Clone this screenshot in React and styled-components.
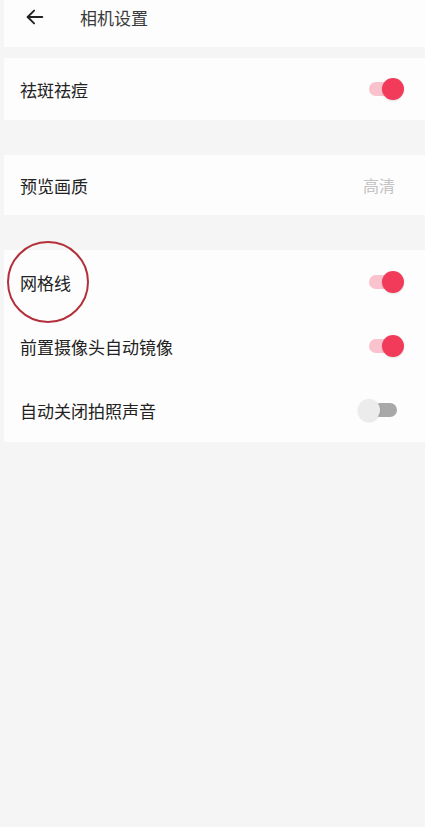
import styled, { createGlobalStyle } from 'styled-components'

const GlobalStyle = createGlobalStyle`
  html, body {
    margin: 0;
    padding: 0;
    background: #f5f5f5;
    font-family: "Noto Sans CJK SC", "Noto Sans", sans-serif;
  }
`

const Page = styled.div`
  min-height: 827px;
  background: #f5f5f5;
  padding-left: 4px;
`

const Header = styled.div`
  height: 34px;
  padding-bottom: 13px;
  display: flex;
  align-items: center;
  background: #fdfdfd;
`

const BackButton = styled.div`
  width: 76px;
  display: flex;
  align-items: center;
  padding-left: 20px;
  box-sizing: border-box;
`

const Title = styled.div`
  font-size: 17px;
  color: #3a3a3a;
`

const Card = styled.div`
  background: #fdfdfd;
  margin-top: ${p => p.$gap}px;
`

const Row = styled.div`
  height: ${p => p.$h}px;
  display: flex;
  align-items: center;
  justify-content: space-between;
  padding: 0 22px 0 16px;
  position: relative;
`

const Label = styled.span`
  font-size: 17px;
  color: #222;
`

const Value = styled.span`
  font-size: 16px;
  color: #c4c4c4;
  margin-right: 8px;
`

const Switch = styled.div`
  position: relative;
  width: 36px;
  height: 22px;
`

const Track = styled.div`
  position: absolute;
  left: ${p => (p.$on ? 2 : 6)}px;
  right: ${p => (p.$on ? 6 : 6)}px;
  top: 4px;
  height: 14px;
  border-radius: 7px;
  background: ${p => (p.$on ? '#f9c2cd' : '#a8a8a8')};
`

const Thumb = styled.div`
  position: absolute;
  top: 0;
  left: ${p => (p.$on ? 15 : -9)}px;
  width: 22px;
  height: 22px;
  border-radius: 50%;
  background: ${p => (p.$on ? '#f23a5a' : '#ececec')};
  box-shadow: 0 1px 2px rgba(0, 0, 0, 0.12);
`

const Ring = styled.div`
  position: absolute;
  left: 3px;
  top: -9px;
  width: 82px;
  height: 82px;
  border: 2px solid #b3303b;
  border-radius: 50%;
  box-sizing: border-box;
  pointer-events: none;
`

const Toggle = ({ on }) => (
  <Switch>
    <Track $on={on} />
    <Thumb $on={on} />
  </Switch>
)

export default function App () {
  return (
    <Page>
      <GlobalStyle />
      <Header>
        <BackButton>
          <svg width='22' height='22' viewBox='0 0 24 24' fill='none' stroke='#222' strokeWidth='2' strokeLinecap='round' strokeLinejoin='round'>
            <path d='M20 12H4' />
            <path d='M11 5l-7 7 7 7' />
          </svg>
        </BackButton>
        <Title>相机设置</Title>
      </Header>

      <Card $gap={11}>
        <Row $h={62}>
          <Label>祛斑祛痘</Label>
          <Toggle on />
        </Row>
      </Card>

      <Card $gap={35}>
        <Row $h={60}>
          <Label>预览画质</Label>
          <Value>高清</Value>
        </Row>
      </Card>

      <Card $gap={35}>
        <Row $h={64}>
          <Ring />
          <Label>网格线</Label>
          <Toggle on />
        </Row>
        <Row $h={64}>
          <Label>前置摄像头自动镜像</Label>
          <Toggle on />
        </Row>
        <Row $h={64}>
          <Label>自动关闭拍照声音</Label>
          <Toggle />
        </Row>
      </Card>
    </Page>
  )
}
